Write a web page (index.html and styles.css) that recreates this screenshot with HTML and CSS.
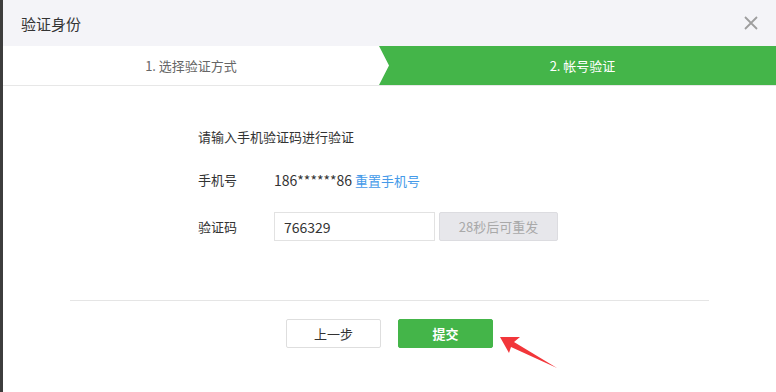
FILE: index.html
```html
<!DOCTYPE html>
<html>
  <head>
    <title>验证身份</title>
    <link rel="stylesheet" href="styles.css">
  </head>
  <body>
    <div class="sidebar"></div>

    <div class="dialog">
      <div class="dialog-hd">
        <span class="dialog-title">验证身份</span>
        <svg class="close" width="14" height="14" viewBox="0 0 14 14">
          <path d="M1 1 L13 13 M13 1 L1 13" stroke="#9e9e9e" stroke-width="1.8" fill="none"/>
        </svg>
      </div>

      <div class="steps">
        <div class="step">1. 选择验证方式</div>
        <div class="step current">2. 帐号验证</div>
      </div>

      <div class="form">
        <p class="tips">请输入手机验证码进行验证</p>
        <div class="row">
          <span class="label">手机号</span>
          <span class="value"><span class="num">186******86</span> <a href="#" class="link">重置手机号</a></span>
        </div>
        <div class="row">
          <span class="label">验证码</span>
          <input class="input" type="text" value="766329">
          <button class="btn-resend" disabled>28秒后可重发</button>
        </div>
      </div>

      <div class="footer">
        <button class="btn">上一步</button>
        <button class="btn btn-primary">提交</button>
      </div>
    </div>

    <!-- red annotation arrow pointing at the submit button -->
    <svg class="arrow" width="70" height="40" viewBox="0 0 70 40">
      <polygon points="0,1 20,1 14,6 57,32 11,11 9,17" fill="#f2363a"/>
    </svg>
  </body>
</html>
```

FILE: styles.css
```css
body {
  margin: 0;
  display: flex;
  height: 392px;
  background: #fff;
  font-family: "Noto Sans CJK SC", "Noto Sans", sans-serif;
  font-size: 13px;
  color: #333;
  overflow: hidden;
  position: relative;
}
.sidebar {
  width: 3px;
  background: #3d3d3d;
  flex: none;
}
.dialog {
  flex: 1;
  display: flex;
  flex-direction: column;
}
.dialog-hd {
  height: 46px;
  background: #f4f4f8;
  display: flex;
  align-items: center;
  justify-content: space-between;
  padding: 0 18px;
}
.dialog-title {
  font-size: 15px;
  color: #333;
}
.steps {
  display: flex;
  height: 39px;
  border-bottom: 1px solid #e7e7e7;
}
.step {
  display: flex;
  align-items: center;
  justify-content: center;
  width: 376px;
  color: #666;
}
.step.current {
  flex: 1;
  width: auto;
  padding-left: 10px;
  background: #44b549;
  color: #fff;
  clip-path: polygon(0 0, 100% 0, 100% 100%, 0 100%, 10px 50%);
}
.form {
  padding: 41px 0 0 195px;
}
.tips {
  margin: 0;
  line-height: 20px;
}
.row {
  display: flex;
  align-items: center;
  height: 29px;
  margin-top: 18px;
}
.label {
  width: 76px;
}
.num {
  font-size: 14px;
}
.link {
  color: #459ae9;
  text-decoration: none;
}
.input {
  box-sizing: border-box;
  width: 161px;
  height: 29px;
  border: 1px solid #e2e2e2;
  padding: 0 9px;
  font-family: inherit;
  font-size: 14px;
  color: #333;
  outline: none;
}
.btn-resend {
  box-sizing: border-box;
  margin-left: 4px;
  width: 119px;
  height: 29px;
  border: 1px solid #dcdce0;
  border-radius: 2px;
  background: #e7e7eb;
  color: #a9a9a9;
  font-family: inherit;
  font-size: 13px;
}
.footer {
  margin: 59px 67px 0;
  border-top: 1px solid #e5e5e5;
  padding-top: 18px;
  display: flex;
  justify-content: center;
  gap: 17px;
}
.btn {
  box-sizing: border-box;
  width: 95px;
  height: 29px;
  border: 1px solid #dedede;
  border-radius: 2px;
  background: #fff;
  color: #333;
  font-family: inherit;
  font-size: 13px;
}
.btn-primary {
  background: #44b549;
  border-color: #44b549;
  color: #fff;
  font-weight: bold;
}
.arrow {
  position: absolute;
  left: 500px;
  top: 336px;
}
```
